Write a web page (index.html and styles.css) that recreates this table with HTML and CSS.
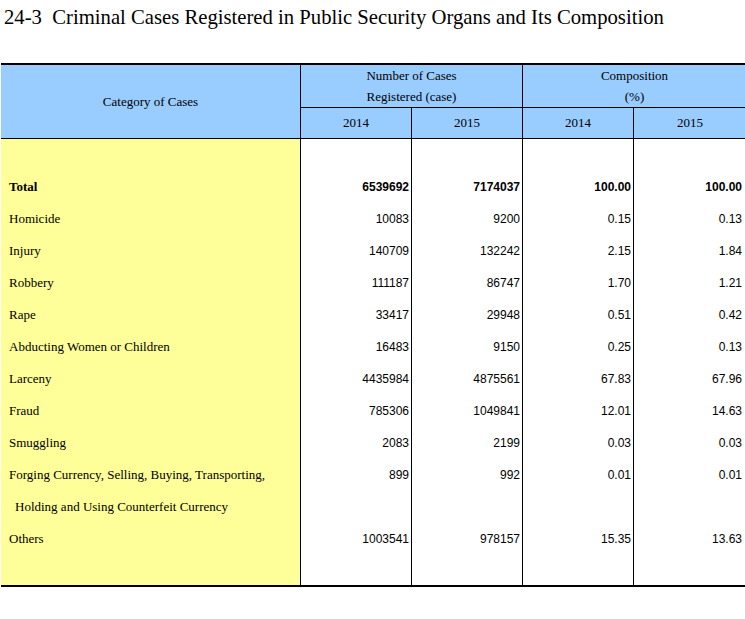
FILE: index.html
```html
<!DOCTYPE html>
<html>
<head>
<meta charset="utf-8">
<link rel="stylesheet" href="styles.css">
</head>
<body>
<h1 class="title">24-3&nbsp; Criminal Cases Registered in Public Security Organs and Its Composition</h1>
<table class="stats">
  <colgroup>
    <col class="c-cat"><col class="c-num"><col class="c-num"><col class="c-num"><col class="c-last">
  </colgroup>
  <thead>
    <tr class="h1">
      <th rowspan="2" class="cat">Category of Cases</th>
      <th colspan="2">Number of Cases<br>Registered (case)</th>
      <th colspan="2" class="last">Composition<br>(%)</th>
    </tr>
    <tr class="h2">
      <th>2014</th><th>2015</th><th>2014</th><th class="last">2015</th>
    </tr>
  </thead>
  <tbody>
    <tr class="blank"><td class="lab"></td><td></td><td></td><td></td><td class="last"></td></tr>
    <tr class="total"><td class="lab">Total</td><td>6539692</td><td>7174037</td><td>100.00</td><td class="last">100.00</td></tr>
    <tr><td class="lab">Homicide</td><td>10083</td><td>9200</td><td>0.15</td><td class="last">0.13</td></tr>
    <tr><td class="lab">Injury</td><td>140709</td><td>132242</td><td>2.15</td><td class="last">1.84</td></tr>
    <tr><td class="lab">Robbery</td><td>111187</td><td>86747</td><td>1.70</td><td class="last">1.21</td></tr>
    <tr><td class="lab">Rape</td><td>33417</td><td>29948</td><td>0.51</td><td class="last">0.42</td></tr>
    <tr><td class="lab">Abducting Women or Children</td><td>16483</td><td>9150</td><td>0.25</td><td class="last">0.13</td></tr>
    <tr><td class="lab">Larceny</td><td>4435984</td><td>4875561</td><td>67.83</td><td class="last">67.96</td></tr>
    <tr><td class="lab">Fraud</td><td>785306</td><td>1049841</td><td>12.01</td><td class="last">14.63</td></tr>
    <tr><td class="lab">Smuggling</td><td>2083</td><td>2199</td><td>0.03</td><td class="last">0.03</td></tr>
    <tr><td class="lab">Forging Currency, Selling, Buying, Transporting,</td><td>899</td><td>992</td><td>0.01</td><td class="last">0.01</td></tr>
    <tr><td class="lab indent">Holding and Using Counterfeit Currency</td><td></td><td></td><td></td><td class="last"></td></tr>
    <tr><td class="lab">Others</td><td>1003541</td><td>978157</td><td>15.35</td><td class="last">13.63</td></tr>
    <tr class="blank end"><td class="lab"></td><td></td><td></td><td></td><td class="last"></td></tr>
  </tbody>
</table>
</body>
</html>
```

FILE: styles.css
```css
html, body {
  margin: 0;
  padding: 0;
  background: #fff;
  overflow: hidden;
}
.title {
  margin: 0 0 0 4px;
  height: 63px;
  font-family: "Liberation Serif", "Times New Roman", serif;
  font-weight: normal;
  font-size: 20.7px;
  line-height: 34px;
  color: #000;
  white-space: nowrap;
}
.stats {
  margin-left: 1px;
  border-collapse: separate;
  border-spacing: 0;
  table-layout: fixed;
  width: 745px;
  border-top: 2px solid #000;
  border-bottom: 2px solid #000;
  font-size: 12px;
  color: #000;
}
.c-cat { width: 300px; }
.c-num { width: 111px; }
.c-last { width: 112px; }
.stats th {
  background: #99ccff;
  font-family: "Liberation Serif", "Times New Roman", serif;
  font-weight: normal;
  font-size: 13px;
  text-align: center;
  vertical-align: middle;
  padding: 0;
  border-right: 1px solid #000;
  border-bottom: 1px solid #000;
}
.stats th.last { border-right: none; }
.h1 th { height: 41px; line-height: 21px; }
.h1 th.cat { height: auto; line-height: 16px; }
.h2 th { height: 30px; line-height: 16px; }
.stats td {
  height: 32px;
  padding: 0 2px 0 0;
  font-family: "Liberation Sans", Arial, sans-serif;
  font-size: 12px;
  line-height: 16px;
  text-align: right;
  vertical-align: middle;
  border-right: 1px solid #000;
  white-space: nowrap;
}
.stats td.last { border-right: none; padding-right: 4px; }
.stats td.lab {
  background: #ffff99;
  text-align: left;
  padding: 0 0 0 8px;
  font-family: "Liberation Serif", "Times New Roman", serif;
  font-size: 13px;
}
.stats td.indent { padding-left: 14px; }
.stats tr.total td { font-weight: bold; }
.stats tr.end td { height: 30px; }
```
